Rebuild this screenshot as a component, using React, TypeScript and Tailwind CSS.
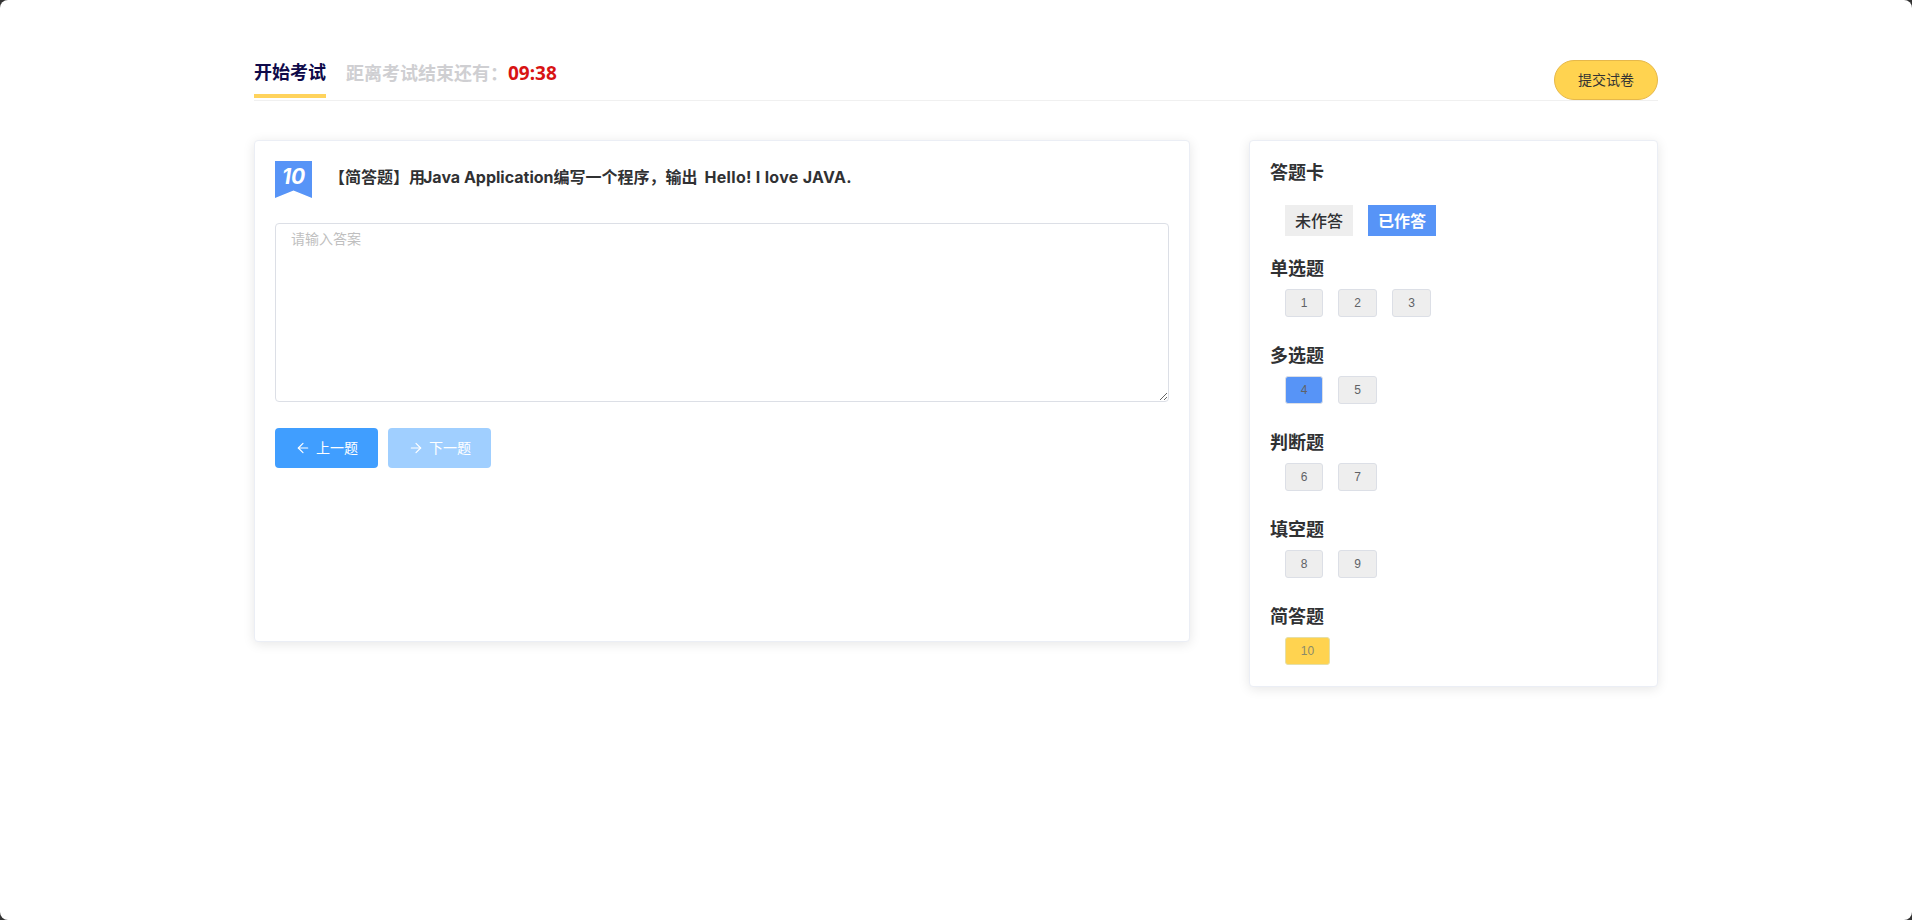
import React from "react";
import { ArrowLeft, ArrowRight } from "lucide-react";

type Item = { n: number; state?: "done" | "current" };

const groups: { title: string; items: Item[] }[] = [
  { title: "单选题", items: [{ n: 1 }, { n: 2 }, { n: 3 }] },
  { title: "多选题", items: [{ n: 4, state: "done" }, { n: 5 }] },
  { title: "判断题", items: [{ n: 6 }, { n: 7 }] },
  { title: "填空题", items: [{ n: 8 }, { n: 9 }] },
  { title: "简答题", items: [{ n: 10, state: "current" }] },
];

const NumButton = ({ item, first }: { item: Item; first: boolean }) => {
  if (item.state === "done") {
    return (
      <div className="w-[38px] h-[28px] flex items-center justify-center rounded-[3px] border border-[#dcdfe6] bg-[#5794f7] text-xs text-[#606266] font-['Liberation_Sans',sans-serif]">
        {item.n}
      </div>
    );
  }
  if (item.state === "current") {
    return (
      <div className="w-[45px] h-[28px] flex items-center justify-center rounded-[3px] border border-[#e5dfa8] bg-[#ffd350] text-xs text-[#8a8a6a] font-['Liberation_Sans',sans-serif]">
        {item.n}
      </div>
    );
  }
  return (
    <div
      className={`${first ? "w-[38px]" : "w-[39px]"} h-[28px] flex items-center justify-center rounded-[3px] border border-[#dcdfe6] bg-[#eeeeee] text-xs text-[#606266] font-['Liberation_Sans',sans-serif]`}
    >
      {item.n}
    </div>
  );
};

export default function App() {
  return (
    <div className="bg-[#333] h-[920px] font-['Inter','Noto_Sans_CJK_SC',sans-serif]">
      <div className="bg-white h-full rounded-lg px-[254px] pt-[60px]">
        {/* Header */}
        <div className="h-[41px] flex justify-between border-b border-[#f0f0f0]">
          <div className="flex items-start">
            <div className="h-[38px] border-b-4 border-[#ffd35c] text-lg font-bold text-[#0f0a4a] leading-[26px]">
              开始考试
            </div>
            <div className="ml-5 text-lg font-bold text-[#cfcfd2] leading-[26px]">
              距离考试结束还有：
              <span className="text-[19px] text-[#d81313] font-['Noto_Sans',sans-serif]">09:38</span>
            </div>
          </div>
          <button className="w-[104px] h-[40px] rounded-[20px] border border-[#e6b84a] bg-[#ffd350] text-sm text-[#333]">
            提交试卷
          </button>
        </div>

        <div className="mt-[39px] flex justify-between items-start">
          {/* Question card */}
          <div className="w-[936px] h-[502px] bg-white rounded border border-[#ebeef5] shadow-[0_2px_12px_0_rgba(0,0,0,0.1)] p-5">
            <div className="flex items-start">
              <div className="w-[37px] h-[37px] bg-[#5794f7] [clip-path:polygon(0_0,100%_0,100%_100%,50%_80%,0_100%)] flex justify-center text-white text-[21px] font-bold italic leading-[32px]">
                10
              </div>
              <div className="ml-[17px] text-base font-bold text-[#303133] leading-[33px]">
                【简答题】用<span className="ml-[-2px]">Java Application</span>编写一个程序，输出
                <span className="ml-[7px] tracking-[0.3px]">Hello! I love JAVA.</span>
              </div>
            </div>
            <textarea
              className="mt-[25px] block w-full h-[179px] rounded border border-[#dcdfe6] px-[15px] py-[5px] text-sm text-[#606266] placeholder:text-[#bfbfbf] outline-none"
              placeholder="请输入答案"
            />
            <div className="mt-[26px] flex gap-[10px]">
              <button className="w-[103px] h-[40px] rounded bg-[#409eff] text-white text-sm flex items-center justify-center gap-[5px]">
                <ArrowLeft className="w-4 h-4" strokeWidth={1.75} />
                上一题
              </button>
              <button className="w-[103px] h-[40px] rounded bg-[#a0cfff] text-white text-sm flex items-center justify-center gap-[5px]">
                <ArrowRight className="w-4 h-4" strokeWidth={1.75} />
                下一题
              </button>
            </div>
          </div>

          {/* Answer sheet */}
          <div className="w-[409px] h-[547px] bg-white rounded border border-[#ebeef5] shadow-[0_2px_12px_0_rgba(0,0,0,0.1)] p-5">
            <div className="text-lg font-bold text-[#303133] leading-[24px]">答题卡</div>
            <div className="mt-[20px] ml-[15px] flex gap-[15px]">
              <span className="w-[68px] h-[31px] flex items-center justify-center bg-[#eeeeee] text-base font-medium text-[#303133]">未作答</span>
              <span className="w-[68px] h-[31px] flex items-center justify-center bg-[#5794f7] text-base font-bold text-white">已作答</span>
            </div>
            {groups.map((g, i) => (
              <div key={g.title} className={i === 0 ? "mt-[22px]" : "mt-[28px]"}>
                <div className="text-lg font-bold text-[#303133] leading-[22px]">{g.title}</div>
                <div className="mt-[9px] ml-[15px] flex gap-[15px]">
                  {g.items.map((item, j) => (
                    <NumButton key={item.n} item={item} first={j === 0} />
                  ))}
                </div>
              </div>
            ))}
          </div>
        </div>
      </div>
    </div>
  );
}
